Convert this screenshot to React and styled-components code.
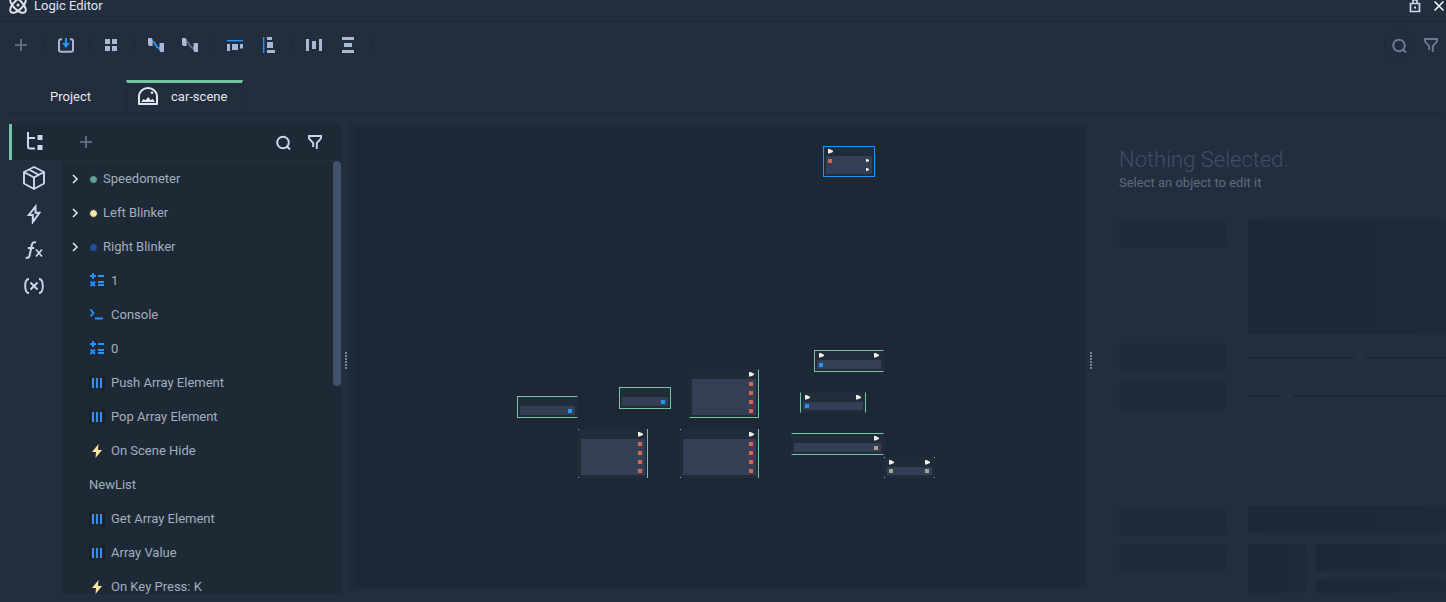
import React from "react";
import styled, { createGlobalStyle, css } from "styled-components";

const c = {
  bg: "#222d3d",
  line: "#1d2836",
  panel: "#1e2936",
  canvas: "#1e2735",
  canvasEdge: "#1f2938",
  text: "#e3e7ee",
  muted: "#a3aebf",
  icon: "#a9b9d3",
  iconLight: "#cbd8ee",
  dim: "#5d6b82",
  blue: "#2492ff",
  green: "#74c5a4",
  body: "#343f56",
  red: "#d0694f",
  olive: "#aaa77c",
  yellow: "#f8e3a1",
};

const GlobalStyle = createGlobalStyle`
  * { box-sizing: border-box; }
  body {
    margin: 0;
    background: ${c.bg};
    color: ${c.text};
    font-family: Roboto, "Liberation Sans", sans-serif;
    font-size: 13px;
    line-height: 16px;
  }
  button {
    margin: 0; padding: 0; border: 0; background: none;
    color: inherit; font: inherit; cursor: pointer;
  }
  svg { display: block; flex: none; }
`;

/* ---------- shell ---------- */

const Shell = styled.div`
  height: 100vh;
  display: flex;
  flex-direction: column;
  overflow: hidden;
`;

const TitleBar = styled.header`
  flex: none;
  height: 22px;
  display: flex;
  align-items: flex-start;
  justify-content: space-between;
  padding: 0 0 0 9px;
  border-bottom: 1px solid ${c.line};
`;

const TitleGroup = styled.div`
  height: 12px;
  display: flex;
  align-items: center;
  gap: ${(p) => p.$gap}px;
`;

const Title = styled.h1`
  margin: 0;
  font-size: 13px;
  font-weight: 400;
  line-height: 12px;
`;

const Toolbar = styled.div`
  flex: none;
  height: 46px;
  display: flex;
  align-items: center;
  justify-content: space-between;
  padding: 0 0 0 4px;
`;

const ToolGroup = styled.div`
  display: flex;
  align-items: center;
  gap: ${(p) => p.$gap || 0}px;
`;

const ToolButton = styled.button`
  width: ${(p) => p.$width || 34}px;
  height: ${(p) => p.$height || 32}px;
  display: flex;
  align-items: center;
  justify-content: center;
  color: ${(p) => p.$color || c.icon};
`;

const RoundButton = styled(ToolButton)`
  border: 1px solid #1f2a39;
  border-radius: 50%;
`;

const Separator = styled.span`
  width: 1px;
  height: 17px;
  margin: 0 4px 0 6px;
  background: #1e2938;
`;

const Tabs = styled.nav`
  flex: none;
  height: 33px;
  display: flex;
  margin: 12px 2px 0 9px;
  padding-left: 5px;
  border-bottom: 1px solid ${c.line};
`;

const Tab = styled.button`
  width: ${(p) => p.$width}px;
  display: flex;
  align-items: center;
  justify-content: ${(p) => (p.$active ? "flex-start" : "center")};
  gap: 13px;
  padding: 3px 0 2px ${(p) => (p.$active ? 11 : 1)}px;
  ${(p) =>
    p.$active &&
    css`
      padding-top: 0;
      border: 1px solid ${c.line};
      border-top: 3px solid ${c.green};
      border-bottom: 0;
    `}
`;

const Workspace = styled.main`
  flex: 1;
  min-height: 0;
  display: flex;
  padding: 11px 0 8px 9px;
`;

/* ---------- side rail ---------- */

const Rail = styled.nav`
  flex: none;
  width: 52px;
`;

const RailButton = styled.button`
  width: 100%;
  height: 36px;
  display: flex;
  align-items: center;
  justify-content: center;
  padding-right: 2px;
  color: ${c.iconLight};
  ${(p) =>
    p.$active &&
    css`
      padding-right: 4px;
      border-left: 3px solid ${c.green};
      background: ${c.panel};
    `}
`;

/* ---------- tree ---------- */

const TreePanel = styled.section`
  flex: none;
  width: 280px;
  display: flex;
  flex-direction: column;
  background: ${c.panel};
`;

const TreeHeader = styled.div`
  flex: none;
  height: 37px;
  display: flex;
  align-items: center;
  justify-content: space-between;
  padding: 0 10px 0 9px;
  border-bottom: 1px solid ${c.bg};
`;

const TreeBody = styled.div`
  flex: 1;
  min-height: 0;
  display: flex;
  overflow: hidden;
`;

const TreeList = styled.ul`
  flex: 1;
  min-width: 0;
  margin: 0;
  padding: 1px 0 0;
  list-style: none;
`;

const TreeRow = styled.li`
  height: 34px;
  display: flex;
  align-items: center;
  gap: ${(p) => (p.$group ? 5 : 6)}px;
  padding: 0 0 0 ${(p) => (p.$group ? 4 : 28)}px;
  color: ${c.muted};
`;

const Expander = styled.button`
  width: 19px;
  height: 18px;
  display: flex;
  align-items: center;
  justify-content: center;
  color: ${c.text};
`;

const Dot = styled.span`
  width: 9px;
  height: 9px;
  border: 1px solid #1b2432;
  border-radius: 50%;
  background: ${(p) => p.$color};
`;

const Thumb = styled.div`
  flex: none;
  width: 8px;
  height: 52%;
  border-radius: 4px;
  background: #43526b;
`;

/* ---------- splitters ---------- */

const Gutter = styled.div`
  flex: none;
  width: ${(p) => p.$width}px;
  display: flex;
  align-items: center;
  padding: 2px 0 0 4px;
  color: #76839a;
`;

/* ---------- canvas ---------- */

const CanvasFrame = styled.section`
  flex: 1;
  min-width: 0;
  display: flex;
  padding: 3px 6px 0;
  margin-bottom: 6px;
  background: ${c.canvasEdge};
`;

const Canvas = styled.div`
  position: relative;
  flex: 1;
  background: ${c.canvas};
  overflow: hidden;
`;

const Node = styled.article`
  position: absolute;
  left: ${(p) => p.$x}px;
  top: ${(p) => p.$y}px;
  width: ${(p) => p.$w}px;
  height: ${(p) => p.$h}px;
  display: flex;
  flex-direction: column;
  padding: 0 2px 2px;
  border: 1px solid transparent;
  background: #212c3b;
  border-top-color: ${(p) => p.$sides.includes("t") && p.$color};
  border-right-color: ${(p) => p.$sides.includes("r") && p.$color};
  border-bottom-color: ${(p) => p.$sides.includes("b") && p.$color};
  border-left-color: ${(p) => p.$sides.includes("l") && p.$color};
`;

const NodeHead = styled.div`
  flex: none;
  height: 9px;
  display: flex;
  align-items: center;
  justify-content: space-between;
  padding: 0 2px;
`;

const NodeBody = styled.div`
  flex: 1;
  min-height: 0;
  display: flex;
  flex-direction: column;
  background: ${c.body};
`;

const PinRow = styled.div`
  flex: 1;
  display: flex;
  align-items: center;
  justify-content: space-between;
  padding: 0 3px 0 2px;
`;

const Pin = styled.span`
  width: 4px;
  height: 4px;
  background: ${(p) => p.$color || "transparent"};
`;

const Corners = styled.span`
  position: absolute;
  inset: -1px;
  background:
    linear-gradient(${c.green}, ${c.green}) 0 0 / 1px 1px no-repeat,
    linear-gradient(${c.green}, ${c.green}) 100% 0 / 1px 1px no-repeat,
    linear-gradient(${c.green}, ${c.green}) 0 100% / 1px 1px no-repeat,
    linear-gradient(${c.green}, ${c.green}) 100% 100% / 1px 1px no-repeat;
`;

/* ---------- inspector ---------- */

const Inspector = styled.aside`
  flex: none;
  width: 350px;
  padding: 22px 0 0 23px;
  overflow: hidden;
`;

const EmptyTitle = styled.h2`
  margin: 0;
  font-size: 22px;
  font-weight: 300;
  line-height: 28px;
  color: #3f4d68;
`;

const EmptyText = styled.p`
  margin: 0 0 27px;
  font-size: 13px;
  font-weight: 400;
  line-height: 18px;
  color: #5d6b82;
`;

const Skeleton = styled.div`
  display: grid;
  grid-template-columns: 107px 1fr;
  grid-template-rows: ${(p) => p.$rows};
  column-gap: 22px;
  row-gap: 9px;
  margin-bottom: 96px;
`;

const Ghost = styled.div`
  height: ${(p) => p.$height || 29}px;
  border-radius: 2px;
  background: ${(p) => (p.$strong ? "linear-gradient(90deg, #1e2735, #202938)" : "#202b3a")};
`;

const GhostSplit = styled.div`
  display: grid;
  grid-template-columns: 59px 1fr;
  column-gap: 9px;
`;

const GhostStack = styled.div`
  display: grid;
  align-content: start;
  row-gap: 8px;
`;

const Slider = styled.input`
  appearance: none;
  width: 100%;
  height: 29px;
  margin: 0;
  background: linear-gradient(#1d2734, #1d2734) center / 100% 2px no-repeat;
  &::-webkit-slider-thumb {
    appearance: none;
    width: 14px;
    height: 14px;
    border-radius: 50%;
    background: #252f42;
  }
`;

/* ---------- icons ---------- */

const Svg = ({ w, h = w, children, ...rest }) => (
  <svg width={w} height={h} viewBox={`0 0 ${w} ${h}`} fill="none" aria-hidden="true" {...rest}>
    {children}
  </svg>
);

const AtomIcon = () => (
  <Svg w={18} stroke="currentColor" strokeWidth="1.9">
    <ellipse cx="9" cy="8" rx="10" ry="4.6" transform="rotate(45 9 8)" />
    <ellipse cx="9" cy="8" rx="10" ry="4.6" transform="rotate(-45 9 8)" />
    <circle cx="9" cy="8" r="1.5" fill="currentColor" stroke="none" />
  </Svg>
);

const LockIcon = () => (
  <Svg w={12} h={15} stroke="currentColor" strokeWidth="1.7">
    <path d="M1.500 4.500h9v8h-9zM4 4.500V1h4v3.500" />
    <path d="M5 7.500h2v2H5z" fill="currentColor" stroke="none" />
  </Svg>
);

const CloseIcon = () => (
  <Svg w={10} stroke="currentColor" strokeWidth="1.5">
    <path d="M.5 .5l9 9M9.500 .5l-9 9" />
  </Svg>
);

const PlusIcon = () => (
  <Svg w={12}>
    <path d="M5 0h2v5h5v2H7v5H5V7H0V5h5z" fill={c.dim} />
  </Svg>
);

const SaveIcon = () => (
  <Svg w={16} h={15}>
    <path d="M4 1.200H3A2 2 0 0 0 1 3.200v8.600a2 2 0 0 0 2 2h10a2 2 0 0 0 2-2V3.200a2 2 0 0 0-2-2h-1" stroke="currentColor" strokeWidth="2" />
    <path d="M7 0h2v5h3L8 10 4 5h3z" fill={c.blue} />
  </Svg>
);

const GridIcon = () => (
  <Svg w={12}>
    <path d="M0 0h5v5H0zM7 0h5v5H7zM0 7h5v5H0zM7 7h5v5H7z" fill="currentColor" />
  </Svg>
);

const LinkIcon = ({ wire }) => (
  <Svg w={16} h={14}>
    <path d="M4 3.400c4 0 3 7 8 7" stroke={wire} strokeWidth="1.900" />
    <path d="M0 0h3.400L4.600 1.400V8H1.200L0 6.600zM11.600 5H16v9h-3.400l-1.200-1.400z" fill="currentColor" />
  </Svg>
);

const AlignTopIcon = () => (
  <Svg w={16} h={11}>
    <path d="M0 0h16v1.400H0z" fill={c.blue} />
    <path d="M0 4h3v7H0zM5 4h6v6H5zM13 4h3v4.500h-3z" fill="currentColor" />
  </Svg>
);

const AlignLeftIcon = () => (
  <Svg w={12} h={16}>
    <path d="M0 0h1.400v16H0z" fill={c.blue} />
    <path d="M4 0h5v3H4zM4 5h6v6H4zM4 13h8v3H4z" fill="currentColor" />
  </Svg>
);

const SpreadXIcon = () => (
  <Svg w={16} h={12}>
    <path d="M0 0h3v12H0zM6 2h4v8H6zM13 0h3v12h-3z" fill="currentColor" />
  </Svg>
);

const SpreadYIcon = () => (
  <Svg w={12} h={16}>
    <path d="M0 0h12v3H0zM2 6h8v4H2zM0 13h12v3H0z" fill="currentColor" />
  </Svg>
);

const SearchIcon = () => (
  <Svg w={15} stroke="currentColor" strokeWidth="2">
    <circle cx="7" cy="7.500" r="5.800" />
    <path d="M10.500 11l3.500 3.500" />
  </Svg>
);

const FilterIcon = () => (
  <Svg w={14} stroke="currentColor" strokeWidth="1.900">
    <path d="M5.200 12V8L1 3.400V1h12v2.400L8.800 8v6" />
  </Svg>
);

const SceneIcon = () => (
  <Svg w={20}>
    <path d="M1 17V9.500a9 8.500 0 0 1 18 0V17z" stroke="currentColor" strokeWidth="2" strokeLinejoin="round" />
    <path d="M3 15l2.600-3 1.800 1.200L10.200 10l2.600 3.200 1.800-1.400L17 15z" fill="currentColor" />
    <circle cx="14" cy="5.800" r="1.300" fill="currentColor" />
  </Svg>
);

const TreeIcon = () => (
  <Svg w={16} h={20}>
    <path d="M1 0v14.500a2 2 0 0 0 2 2h5M1 6h7" stroke="currentColor" strokeWidth="2" />
    <path d="M10.500 3h5v5h-5zM10.500 13h5v5h-5z" fill="currentColor" />
  </Svg>
);

const CubeIcon = () => (
  <Svg w={22} h={24} stroke="currentColor" strokeWidth="1.900" strokeLinejoin="round">
    <path d="M11 1l10 5v11.500L11 23 1 17.500V6zM1 6l10 5.500L21 6M11 11.500V23M6 3.500L16 9" />
  </Svg>
);

const BoltOutlineIcon = () => (
  <Svg w={14} h={20} stroke="currentColor" strokeWidth="2">
    <path d="M8.500 2.500L1.800 11h4v7L12.400 8.800H8.500z" />
  </Svg>
);

const FxIcon = () => (
  <Svg w={18} stroke="currentColor" strokeWidth="2">
    <path d="M11 1.400C8.400.6 7.300 1.600 6.800 4L4.600 14.500C4.200 16.600 2.600 17.200.6 16.600M2.800 7h6.400" />
    <path d="M11 8.500l6 7M17 8.500l-6 7" strokeWidth="1.700" />
  </Svg>
);

const VarIcon = () => (
  <Svg w={20} h={16} stroke="currentColor" strokeWidth="1.900">
    <path d="M5 1C2.500 1 1.200 3 1.200 8S2.500 15 5 15M15 1c2.500 0 3.800 2 3.800 7S17.500 15 15 15" />
    <path d="M6.500 4.500l7 7M13.500 4.500l-7 7" />
  </Svg>
);

const ChevronIcon = () => (
  <Svg w={8} h={10} stroke="currentColor" strokeWidth="1.500">
    <path d="M2 1l4 4-4 4" />
  </Svg>
);

const MathIcon = () => (
  <Svg w={16}>
    <path d="M3 0h2v2h2v2H5v2H3V4H1V2h2zM9 2h6v2H9zM9 8h6v2H9zM9 11h6v2H9z" fill={c.blue} />
    <path d="M1.500 8.500l4.500 4.500M6 8.500L1.500 13" stroke={c.blue} strokeWidth="1.900" />
  </Svg>
);

const ConsoleIcon = () => (
  <Svg w={16}>
    <path d="M1.500 2.500l3 3.500-3 3.500" stroke={c.blue} strokeWidth="1.900" />
    <path d="M6 10.500h8v2H6z" fill={c.blue} />
  </Svg>
);

const ArrayIcon = () => (
  <Svg w={16}>
    <path d="M4 1H1v14h3M12 1h3v14h-3" stroke="#171f2c" strokeWidth="2" />
    <path d="M3 3h2v10H3zM7 3h2v10H7zM11 3h2v10h-2z" fill="#3b8cf0" />
  </Svg>
);

const BoltIcon = () => (
  <Svg w={16}>
    <path d="M9.500 1L3 9h4L6.500 15 13 7H9z" fill={c.yellow} />
  </Svg>
);

const Arrow = () => (
  <Svg w={5}>
    <path d="M0 0h1.500L5 1.800v1.200L1.500 4.500H0z" fill="#f0efe8" />
  </Svg>
);

const MiniArrow = () => (
  <Svg w={3}>
    <path d="M0 0h1L3 1v1L1 3H0z" fill="#f0efe8" />
  </Svg>
);

const Grip = () => (
  <Svg w={2} h={17}>
    {[0, 3, 6, 9, 12, 15].map((y) => (
      <path key={y} d={`M0 ${y}h2v2h-2z`} fill="currentColor" />
    ))}
  </Svg>
);

/* ---------- data ---------- */

const tools = [
  [["Add", PlusIcon]],
  [["Save", SaveIcon]],
  [["Grid", GridIcon]],
  [
    ["Show links", () => <LinkIcon wire={c.blue} />],
    ["Hide links", () => <LinkIcon wire={c.dim} />],
  ],
  [
    ["Align top", AlignTopIcon],
    ["Align left", AlignLeftIcon],
  ],
  [
    ["Distribute horizontally", SpreadXIcon],
    ["Distribute vertically", SpreadYIcon],
  ],
];

const rail = [
  ["Tree", TreeIcon],
  ["Objects", CubeIcon],
  ["Events", BoltOutlineIcon],
  ["Functions", FxIcon],
  ["Variables", VarIcon],
];

const groups = [
  ["Speedometer", "#5ba298"],
  ["Left Blinker", "#f8e3a1"],
  ["Right Blinker", "#21529a"],
];

const leaves = [
  ["1", MathIcon],
  ["Console", ConsoleIcon],
  ["0", MathIcon],
  ["Push Array Element", ArrayIcon],
  ["Pop Array Element", ArrayIcon],
  ["On Scene Hide", BoltIcon],
  ["NewList", null],
  ["Get Array Element", ArrayIcon],
  ["Array Value", ArrayIcon],
  ["On Key Press: K", BoltIcon],
];

const fourRed = [1, 2, 3, 4].map(() => [null, c.red]);

const nodes = [
  { x: 468, y: 19, w: 52, h: 31, sides: "trbl", color: c.blue, in: true, rows: [[c.red, "arrow"], [null, "arrow"]] },
  { x: 162, y: 269, w: 61, h: 22, sides: "tbl", rows: [[null, c.blue]] },
  { x: 264, y: 260, w: 52, h: 22, sides: "trbl", rows: [[null, c.blue]] },
  { x: 334, y: 242, w: 70, h: 49, sides: "rb", out: true, rows: fourRed },
  { x: 459, y: 223, w: 70, h: 22, sides: "tbl", in: true, out: true, rows: [[c.blue, null]] },
  { x: 445, y: 265, w: 66, h: 21, sides: "lr", in: true, out: true, rows: [[c.blue, null]] },
  { x: 223, y: 302, w: 70, h: 49, sides: "r", out: true, rows: fourRed },
  { x: 325, y: 302, w: 79, h: 49, sides: "r", out: true, rows: fourRed },
  { x: 436, y: 306, w: 93, h: 22, sides: "tb", out: true, rows: [[null, c.olive]] },
  { x: 529, y: 330, w: 51, h: 21, sides: "", in: true, out: true, rows: [[c.olive, c.olive]] },
];

const GraphNode = ({ node }) => (
  <Node $x={node.x} $y={node.y} $w={node.w} $h={node.h} $sides={node.sides} $color={node.color || c.green}>
    {node.sides.length < 2 && <Corners />}
    <NodeHead>
      {node.in ? <Arrow /> : <Pin />}
      {node.out ? <Arrow /> : <Pin />}
    </NodeHead>
    <NodeBody>
      {node.rows.map(([left, right], i) => (
        <PinRow key={i}>
          <Pin $color={left} />
          {right === "arrow" ? <MiniArrow /> : <Pin $color={right} />}
        </PinRow>
      ))}
    </NodeBody>
  </Node>
);

export default function App() {
  return (
    <Shell>
      <GlobalStyle />
      <TitleBar>
        <TitleGroup $gap={7}>
          <AtomIcon />
          <Title>Logic Editor</Title>
        </TitleGroup>
        <TitleGroup $gap={0}>
          <ToolButton $width={34} $height={12} $color={c.iconLight} aria-label="Lock">
            <LockIcon />
          </ToolButton>
          <ToolButton $width={14} $height={12} $color="#ffffff" aria-label="Close">
            <CloseIcon />
          </ToolButton>
        </TitleGroup>
      </TitleBar>

      <Toolbar>
        <ToolGroup>
          {tools.map((group, i) => (
            <React.Fragment key={i}>
              {group.map(([label, Icon]) => (
                <ToolButton key={label} aria-label={label}>
                  <Icon />
                </ToolButton>
              ))}
              <Separator />
            </React.Fragment>
          ))}
        </ToolGroup>
        <ToolGroup $gap={2}>
          <RoundButton $width={30} $color="#6b7a93" aria-label="Search graph">
            <SearchIcon />
          </RoundButton>
          <ToolButton $width={30} $color="#6b7a93" aria-label="Filter graph">
            <FilterIcon />
          </ToolButton>
        </ToolGroup>
      </Toolbar>

      <Tabs>
        <Tab $width={112}>Project</Tab>
        <Tab $width={117} $active>
          <SceneIcon />
          car-scene
        </Tab>
      </Tabs>

      <Workspace>
        <Rail>
          {rail.map(([label, Icon], i) => (
            <RailButton key={label} $active={i === 0} aria-label={label}>
              <Icon />
            </RailButton>
          ))}
        </Rail>

        <TreePanel>
          <TreeHeader>
            <ToolButton $width={32} aria-label="Add item">
              <PlusIcon />
            </ToolButton>
            <ToolGroup>
              <ToolButton $width={32} $color={c.iconLight} aria-label="Search tree">
                <SearchIcon />
              </ToolButton>
              <ToolButton $width={32} $color={c.iconLight} aria-label="Filter tree">
                <FilterIcon />
              </ToolButton>
            </ToolGroup>
          </TreeHeader>
          <TreeBody>
            <TreeList>
              {groups.map(([name, color]) => (
                <TreeRow key={name} $group>
                  <Expander aria-label={`Expand ${name}`}>
                    <ChevronIcon />
                  </Expander>
                  <Dot $color={color} />
                  {name}
                </TreeRow>
              ))}
              {leaves.map(([name, Icon]) => (
                <TreeRow key={name}>
                  {Icon && <Icon />}
                  {name}
                </TreeRow>
              ))}
            </TreeList>
            <Thumb />
          </TreeBody>
        </TreePanel>

        <Gutter $width={8}>
          <Grip />
        </Gutter>

        <CanvasFrame>
          <Canvas>
            {nodes.map((node, i) => (
              <GraphNode key={i} node={node} />
            ))}
          </Canvas>
        </CanvasFrame>

        <Gutter $width={10}>
          <Grip />
        </Gutter>

        <Inspector>
          <EmptyTitle>Nothing Selected.</EmptyTitle>
          <EmptyText>Select an object to edit it</EmptyText>
          <Skeleton $rows="115px 29px 29px">
            <Ghost />
            <Ghost $strong $height={115} />
            <Ghost />
            <Slider type="range" aria-label="First value" defaultValue={57} disabled />
            <Ghost />
            <Slider type="range" aria-label="Second value" defaultValue={17} disabled />
          </Skeleton>
          <Skeleton $rows="29px 49px">
            <Ghost />
            <Ghost $strong $height={27} />
            <Ghost />
            <GhostSplit>
              <Ghost $strong $height={49} />
              <GhostStack>
                <Ghost $strong $height={27} />
                <Ghost $strong $height={14} />
              </GhostStack>
            </GhostSplit>
          </Skeleton>
        </Inspector>
      </Workspace>
    </Shell>
  );
}
